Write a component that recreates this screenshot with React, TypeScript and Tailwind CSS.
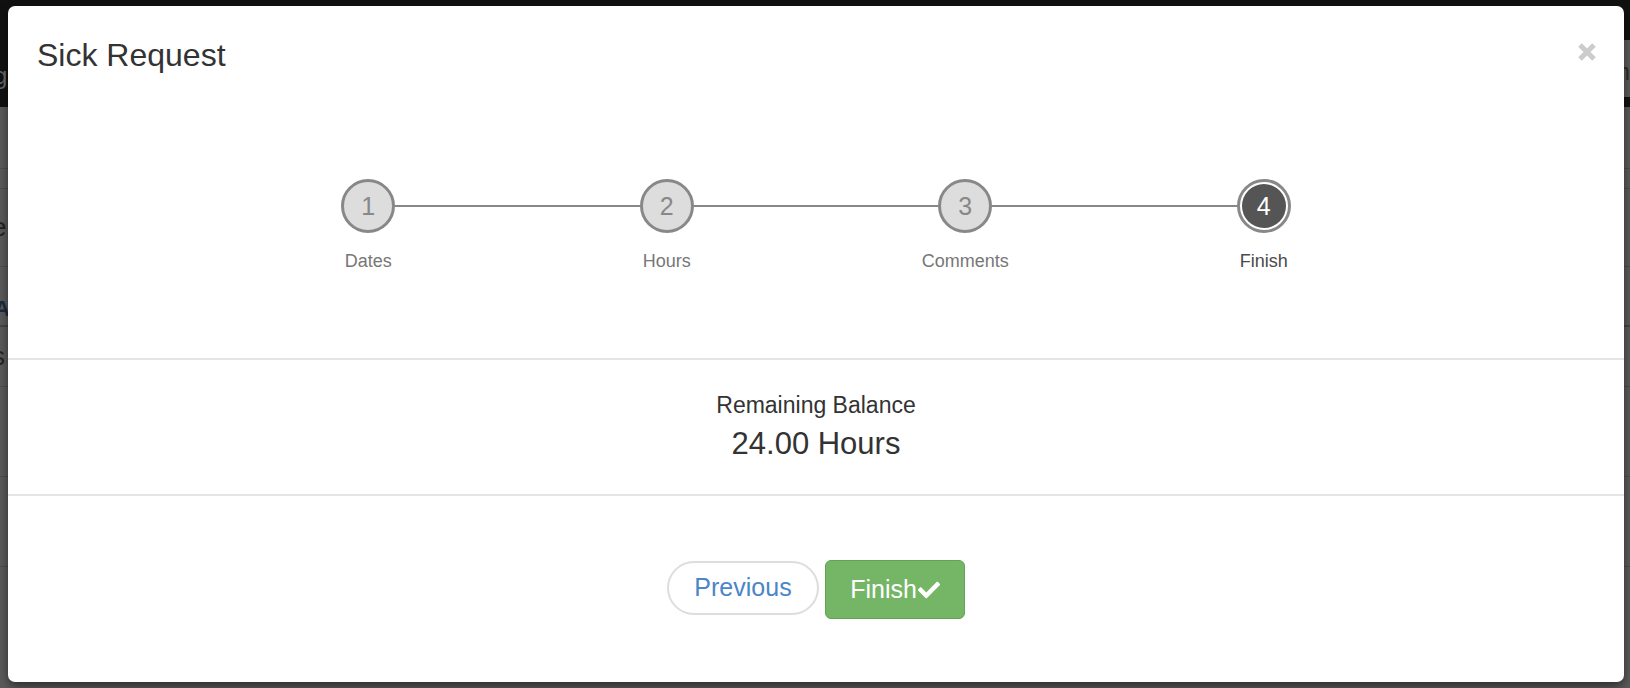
import React from "react";
import { FaCheck } from "react-icons/fa";

const steps = [
  { n: 1, label: "Dates" },
  { n: 2, label: "Hours" },
  { n: 3, label: "Comments" },
  { n: 4, label: "Finish" },
];

const Step = ({ n, label, active }: { n: number; label: string; active: boolean }) => (
  <div className="flex flex-col items-center">
    {active ? (
      <div className="w-[54px] h-[54px] rounded-full border-[3px] border-[#888] bg-white p-[2px]">
        <div className="w-full h-full rounded-full bg-[#555] flex items-center justify-center text-white text-[25px] leading-none">
          {n}
        </div>
      </div>
    ) : (
      <div className="w-[54px] h-[54px] rounded-full border-[3px] border-[#888] bg-[#dddddd] flex items-center justify-center text-[#888] text-[25px] leading-none">
        {n}
      </div>
    )}
    <div className={"mt-[18px] text-[18px] leading-[20px] " + (active ? "text-[#4a4a4a]" : "text-[#777]")}>
      {label}
    </div>
  </div>
);

const App = () => {
  return (
    <div
      className="relative w-[1630px] h-[688px] overflow-hidden bg-[#5a5a5a]"
      style={{ fontFamily: '"Liberation Sans", Arial, sans-serif' }}
    >
      {/* page behind the overlay */}
      <div className="h-[107px] bg-[#111] flex justify-between">
        <div className="pt-[58px] -ml-[6px] text-[24px] text-[#6a6a6a]">g</div>
        <div className="mt-[40px] h-[57px] w-[20px] bg-[#5a5a5a] pt-[14px] text-[24px] text-[#2a2a2a]">m</div>
      </div>
      <div className="flex flex-col">
        <div className="h-[62px] border-b border-[#4c4c4c]" />
        <div className="h-[20px] border-b border-[#4c4c4c]" />
        <div className="h-[78px] border-b border-[#4c4c4c] flex items-center -ml-[8px] text-[26px] text-[#222]">e</div>
        <div className="h-[60px] border-b-2 border-[#444] flex items-end -ml-[6px] text-[22px] font-bold text-[#1c2a3a]">A</div>
        <div className="h-[60px] border-b border-[#4c4c4c] flex items-center -ml-[8px] text-[26px] text-[#222]">s</div>
        <div className="h-[90px] border-b border-[#4c4c4c]" />
        <div className="h-[90px] border-b border-[#4c4c4c]" />
      </div>

      {/* modal */}
      <div className="absolute left-[8px] top-[6px] w-[1616px] h-[676px] rounded-[7px] bg-white shadow-[0_4px_10px_rgba(0,0,0,0.5)] flex flex-col text-[#333]">
        <div className="h-[354px] border-b-2 border-[#e5e5e5] flex flex-col">
          <div className="pt-[31px] pl-[29px] pr-[27px] flex justify-between">
            <h4 className="text-[32px] leading-[36px]">Sick Request</h4>
            <svg width="20" height="20" viewBox="0 0 20 20" className="mt-[5px]">
              <path d="M3 3 L17 17 M17 3 L3 17" stroke="#cccccc" strokeWidth="5" />
            </svg>
          </div>
          <div className="relative mt-[106px] mx-auto w-[1194px] grid grid-cols-4">
            <div className="absolute left-[150px] right-[150px] top-[26px] h-[2px] bg-[#888]" />
            {steps.map((s) => (
              <div key={s.n} className="relative flex justify-center">
                <Step n={s.n} label={s.label} active={s.n === 4} />
              </div>
            ))}
          </div>
        </div>

        <div className="h-[136px] border-b-2 border-[#e5e5e5] flex flex-col items-center pt-[32px]">
          <div className="text-[23px] leading-[26px]">Remaining Balance</div>
          <div className="mt-[9px] text-[31px] leading-[34px]">24.00 Hours</div>
        </div>

        <div className="flex justify-center items-start gap-[6px] pt-[64px]">
          <button className="mt-px w-[152px] h-[54px] rounded-full border-2 border-[#dddddd] bg-white text-[25px] text-[#4a86c8] flex items-center justify-center">
            Previous
          </button>
          <button className="w-[140px] h-[59px] rounded-[6px] border border-[#5fa552] bg-[#74b566] text-[25px] text-white flex items-center justify-center">
            Finish
            <FaCheck className="w-[22px] h-[22px] ml-px" />
          </button>
        </div>
      </div>
    </div>
  );
};

export default App;
